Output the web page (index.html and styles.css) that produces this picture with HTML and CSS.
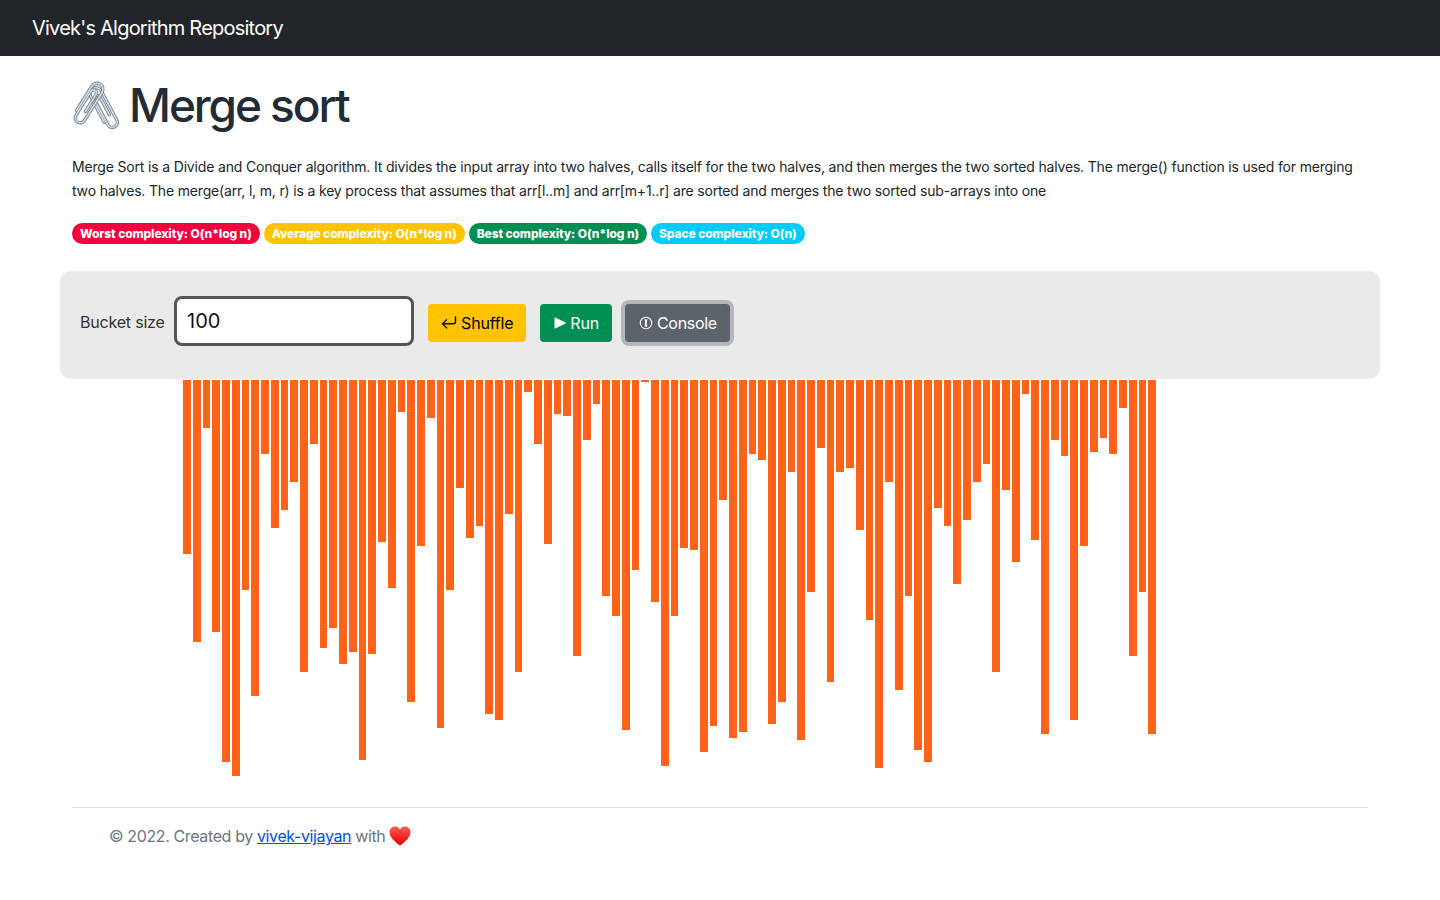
FILE: index.html
```html
<!DOCTYPE html>
<html>
<head>
    <title>Merge sort - Vivek's Algorithm Repository</title>
    <meta charset="utf-8">
    <link rel="stylesheet" href="styles.css">
</head>
<body>
    <nav class="navbar">
        <a class="brand">Vivek's Algorithm Repository</a>
    </nav>

    <div class="container">
        <div class="content">
            <h1 class="title">
                <svg class="title-icon" viewBox="0 0 48 48" width="48" height="48">
                    <defs>
                        <path id="clip" d="M-6 14V-15a6 6 0 0 1 12 0V18a5 5 0 0 1-10 0V-10a3 3 0 0 1 6 0V10" fill="none" stroke-linecap="round"/>
                    </defs>
                    <g transform="translate(31 26) rotate(-28)">
                        <use href="#clip" stroke="#6f7f8d" stroke-width="3.300"/>
                        <use href="#clip" stroke="#d5dee7" stroke-width="1.600"/>
                    </g>
                    <g transform="translate(17 21) rotate(32)">
                        <use href="#clip" stroke="#6f7f8d" stroke-width="3.300"/>
                        <use href="#clip" stroke="#d5dee7" stroke-width="1.600"/>
                    </g>
                </svg>
                <span>Merge sort</span>
            </h1>
            <p class="description">Merge Sort is a Divide and Conquer algorithm. It divides the input array into two halves, calls itself for the two halves, and then merges the two sorted halves. The merge() function is used for merging two halves. The merge(arr, l, m, r) is a key process that assumes that arr[l..m] and arr[m+1..r] are sorted and merges the two sorted sub-arrays into one</p>
            <div class="badges">
                <span class="badge red">Worst complexity: O(n*log n)</span>
                <span class="badge yellow">Average complexity: O(n*log n)</span>
                <span class="badge green">Best complexity: O(n*log n)</span>
                <span class="badge cyan">Space complexity: O(n)</span>
            </div>
        </div>

        <div class="panel">
            <label class="panel-label">Bucket size</label>
            <input class="bucket-input" type="text" value="100">
            <button class="button shuffle">
                <svg viewBox="0 0 16 16" width="16" height="16" fill="currentColor" stroke="currentColor" stroke-width="0.4"><path d="M14.500 1.500a.5.5 0 0 1 .5.5v4.800a2.500 2.500 0 0 1-2.500 2.500H2.707l3.347 3.346a.5.5 0 0 1-.708.708l-4.200-4.200a.5.5 0 0 1 0-.708l4-4a.5.5 0 1 1 .708.708L2.707 8.300H12.500A1.500 1.500 0 0 0 14 6.800V2a.5.5 0 0 1 .5-.5z"/></svg>
                Shuffle
            </button>
            <button class="button run">
                <svg viewBox="0 0 12 12" width="12" height="12" fill="currentColor"><path d="M.5.5h.8l10.300 5v1L1.300 11.500H.5z"/></svg>
                Run
            </button>
            <button class="button console">
                <svg viewBox="0 0 14 14" width="14" height="14" fill="none" stroke="currentColor"><circle cx="7" cy="7" r="5.700" stroke-width="1.100"/><path d="M5.600 3.900h2.800M5.600 10.100h2.800" stroke-width="1"/><path d="M7 3.900v6.200" stroke-width="1.800"/></svg>
                Console
            </button>
        </div>

        <div class="chart">
            <div class="bar" style="height:174px"></div><div class="bar" style="height:262px"></div><div class="bar" style="height:48px"></div><div class="bar" style="height:252px"></div><div class="bar" style="height:382px"></div>
            <div class="bar" style="height:396px"></div><div class="bar" style="height:210px"></div><div class="bar" style="height:316px"></div><div class="bar" style="height:74px"></div><div class="bar" style="height:148px"></div>
            <div class="bar" style="height:130px"></div><div class="bar" style="height:102px"></div><div class="bar" style="height:292px"></div><div class="bar" style="height:64px"></div><div class="bar" style="height:268px"></div>
            <div class="bar" style="height:248px"></div><div class="bar" style="height:284px"></div><div class="bar" style="height:272px"></div><div class="bar" style="height:380px"></div><div class="bar" style="height:274px"></div>
            <div class="bar" style="height:162px"></div><div class="bar" style="height:208px"></div><div class="bar" style="height:32px"></div><div class="bar" style="height:322px"></div><div class="bar" style="height:166px"></div>
            <div class="bar" style="height:38px"></div><div class="bar" style="height:348px"></div><div class="bar" style="height:210px"></div><div class="bar" style="height:108px"></div><div class="bar" style="height:158px"></div>
            <div class="bar" style="height:146px"></div><div class="bar" style="height:334px"></div><div class="bar" style="height:340px"></div><div class="bar" style="height:134px"></div><div class="bar" style="height:292px"></div>
            <div class="bar" style="height:12px"></div><div class="bar" style="height:64px"></div><div class="bar" style="height:164px"></div><div class="bar" style="height:34px"></div><div class="bar" style="height:36px"></div>
            <div class="bar" style="height:276px"></div><div class="bar" style="height:60px"></div><div class="bar" style="height:24px"></div><div class="bar" style="height:216px"></div><div class="bar" style="height:236px"></div>
            <div class="bar" style="height:350px"></div><div class="bar" style="height:190px"></div><div class="bar" style="height:2px"></div><div class="bar" style="height:222px"></div><div class="bar" style="height:386px"></div>
            <div class="bar" style="height:236px"></div><div class="bar" style="height:168px"></div><div class="bar" style="height:170px"></div><div class="bar" style="height:372px"></div><div class="bar" style="height:346px"></div>
            <div class="bar" style="height:120px"></div><div class="bar" style="height:358px"></div><div class="bar" style="height:352px"></div><div class="bar" style="height:74px"></div><div class="bar" style="height:80px"></div>
            <div class="bar" style="height:344px"></div><div class="bar" style="height:322px"></div><div class="bar" style="height:92px"></div><div class="bar" style="height:360px"></div><div class="bar" style="height:212px"></div>
            <div class="bar" style="height:68px"></div><div class="bar" style="height:302px"></div><div class="bar" style="height:92px"></div><div class="bar" style="height:88px"></div><div class="bar" style="height:150px"></div>
            <div class="bar" style="height:240px"></div><div class="bar" style="height:388px"></div><div class="bar" style="height:102px"></div><div class="bar" style="height:310px"></div><div class="bar" style="height:216px"></div>
            <div class="bar" style="height:370px"></div><div class="bar" style="height:382px"></div><div class="bar" style="height:128px"></div><div class="bar" style="height:146px"></div><div class="bar" style="height:204px"></div>
            <div class="bar" style="height:140px"></div><div class="bar" style="height:102px"></div><div class="bar" style="height:84px"></div><div class="bar" style="height:292px"></div><div class="bar" style="height:110px"></div>
            <div class="bar" style="height:182px"></div><div class="bar" style="height:14px"></div><div class="bar" style="height:160px"></div><div class="bar" style="height:354px"></div><div class="bar" style="height:60px"></div>
            <div class="bar" style="height:76px"></div><div class="bar" style="height:340px"></div><div class="bar" style="height:166px"></div><div class="bar" style="height:72px"></div><div class="bar" style="height:58px"></div>
            <div class="bar" style="height:74px"></div><div class="bar" style="height:28px"></div><div class="bar" style="height:276px"></div><div class="bar" style="height:212px"></div><div class="bar" style="height:354px"></div>
        </div>

        <footer class="footer">
            <span>© 2022. Created by <a href="#">vivek-vijayan</a> with</span>
            <svg class="heart" viewBox="0 0 22 20" width="22" height="20">
                <defs>
                    <linearGradient id="heartFill" x1="0" y1="0" x2="0" y2="1">
                        <stop offset="0" stop-color="#ff5a50"/>
                        <stop offset="1" stop-color="#e00000"/>
                    </linearGradient>
                </defs>
                <path d="M11 19.600C6 15.600.6 11.600.6 6.200.6 2.800 3.200.6 6 .6c2.200 0 4 1.100 5 3 1-1.900 2.800-3 5-3 2.800 0 5.400 2.200 5.400 5.600C21.400 11.600 16 15.600 11 19.600z" fill="url(#heartFill)"/>
            </svg>
        </footer>
    </div>
</body>
</html>
```

FILE: styles.css
```css
body {
    font-family: Inter, "Liberation Sans", sans-serif;
    margin: 0;
    background-color: white;
    color: #212529;
}
.navbar {
    height: 56px;
    background-color: #212529;
    display: flex;
    align-items: center;
    padding: 0 32px;
}
.brand {
    color: white;
    font-size: 20px;
    letter-spacing: -0.78px;
}
.container {
    margin: 0 60px;
}
.content {
    padding: 0 12px;
}
.title {
    margin: 0;
    padding-top: 13px;
    height: 72px;
    display: flex;
    align-items: center;
    gap: 9px;
    font-size: 46px;
    font-weight: 500;
    letter-spacing: -2.1px;
    color: #222b36;
}
.title-icon {
    flex: none;
}
.description {
    margin: 14px 0 0;
    font-size: 14px;
    line-height: 24px;
    letter-spacing: -0.17px;
    color: #212529;
}
.badges {
    display: flex;
    gap: 4px;
    margin-top: 20px;
}
.badge {
    height: 21px;
    display: flex;
    align-items: center;
    padding: 0 8px;
    border-radius: 11px;
    font-size: 12px;
    font-weight: 800;
    letter-spacing: -0.09px;
    color: white;
}
.red {
    background-color: #f5003c;
}
.yellow {
    background-color: #ffc300;
}
.green {
    background-color: #008f52;
}
.cyan {
    background-color: #00cbfa;
}
.panel {
    margin-top: 27px;
    height: 108px;
    box-sizing: border-box;
    background-color: #eaeaea;
    border-radius: 10px;
    padding: 25px 20px 0;
    display: flex;
    align-items: flex-start;
}
.panel-label {
    font-size: 16px;
    letter-spacing: -0.2px;
    color: #333;
    margin: 16px 9.5px 0 0;
}
.bucket-input {
    width: 240px;
    height: 50px;
    box-sizing: border-box;
    border: 3px solid #555;
    border-radius: 8px;
    padding: 0 10px;
    font-family: inherit;
    font-size: 20px;
    color: #111;
    background-color: white;
    outline: none;
}
.button {
    height: 38px;
    margin: 8px 0 0 14px;
    padding: 0 13px 0 14px;
    border: none;
    border-radius: 4px;
    display: flex;
    align-items: center;
    gap: 4px;
    font-family: inherit;
    font-size: 16px;
    letter-spacing: -0.2px;
}
.shuffle {
    padding-left: 13px;
    background-color: #ffc300;
    color: black;
}
.run {
    background-color: #008f52;
    color: white;
}
.console {
    margin-left: 13px;
    letter-spacing: -0.3px;
    background-color: #5c636a;
    color: white;
    box-shadow: 0 0 0 4px #b3b7bb;
}
.chart {
    display: flex;
    align-items: flex-start;
    height: 427px;
    margin-top: 1px;
    padding-left: 123px;
}
.bar {
    flex: none;
    width: 7.75px;
    margin-right: 2px;
    background-color: #ff6319;
}
.footer {
    margin: 0 12px;
    border-top: 1px solid #e0e0e0;
    padding: 18px 26px 0 37px;
    display: flex;
    align-items: center;
    gap: 4px;
    font-size: 16px;
    letter-spacing: -0.38px;
    color: #6c757d;
}
.footer a {
    color: #0050f0;
}
.heart {
    flex: none;
}
```
